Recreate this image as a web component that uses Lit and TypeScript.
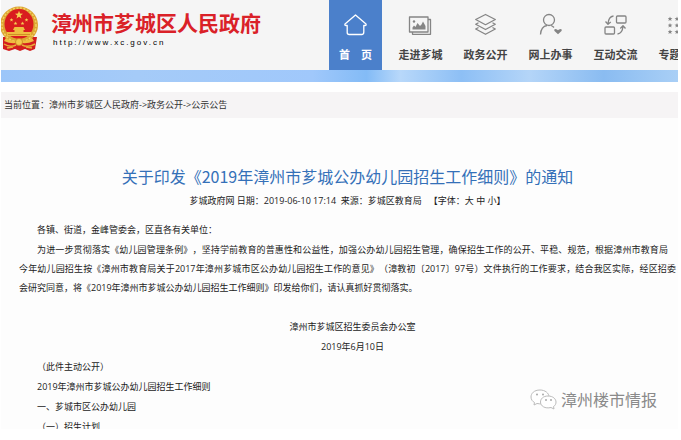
import { LitElement, html, css, svg } from "lit";
import { customElement } from "lit/decorators.js";

const star = (x: number, y: number, r: number) => {
  const pts: string[] = [];
  for (let i = 0; i < 10; i++) {
    const a = -Math.PI / 2 + (i * Math.PI) / 5;
    const q = i % 2 ? r * 0.42 : r;
    pts.push(`${(x + q * Math.cos(a)).toFixed(2)},${(y + q * Math.sin(a)).toFixed(2)}`);
  }
  return svg`<polygon points=${pts.join(" ")} />`;
};

const icons = {
  home: svg`<path d="M12.5 3 L23 12 Q23.6 13.500 22 13.500 H20.8 V20 Q20.8 22.5 18.8 22.5 H6.2 Q4.2 22.5 4.2 20.5 V13.500 H3 Q1.400 13.500 2 12 Z" />`,
  picture: svg`<path d="M1.500 5 H20 V20 H1.500 Z M20.500 7.500 H22.500 V22.300 H4.500 V20.500" />
    <path class="solid" d="M4.500 17.500 V15.500 L6 13.500 L7.500 15 L9.500 11 L12 14 L13.500 12.500 L15 9.500 L17.500 14 V17.500 Z" /><circle class="solid" cx="6" cy="9.500" r="1.200" />`,
  layers: svg`<path d="M12.500 2.500 L22.300 7.500 L12.500 12.700 L2.700 7.500 Z M5.500 10.800 L2.700 12.300 L12.500 17.500 L22.300 12.300 L19.500 10.800 M5.500 15.500 L2.700 17 L12.500 22.300 L22.300 17 L19.500 15.500" />`,
  person: svg`<circle cx="11" cy="8" r="5.500" /><path d="M2.500 22.500 Q3 14.500 9 13.500 M13 13.500 Q14.500 14 16 15.500" />
    <path class="solid" d="M20 22.300 L16.500 19 Q15.600 17 17.600 16.900 Q19.200 17 20 18.300 Q20.800 17 22.400 16.900 Q24.400 17 23.500 19 Z" />`,
  exchange: svg`<rect x="13.500" y="4" width="9.500" height="7" rx="1" /><rect x="2" y="15" width="9.500" height="7" rx="1" />
    <path d="M10.500 4 Q5.500 4.500 5 12 M2.500 9.500 L5 12.300 L7.800 10 M14.500 22 Q19.500 21.500 20 14 M17.300 16.500 L20 13.700 L22.500 16.500" />`,
  stars: svg`<g class="solid">${[7, 13.5, 20].map((y) => [2, 9, 16, 23].map((x) => star(x, y, 2.6)))}</g>`,
};

const nav = [
  { label: "首　页", icon: icons.home },
  { label: "走进芗城", icon: icons.picture },
  { label: "政务公开", icon: icons.layers },
  { label: "网上办事", icon: icons.person },
  { label: "互动交流", icon: icons.exchange },
  { label: "专题专栏", icon: icons.stars },
];

@customElement("app-root")
export class AppRoot extends LitElement {
  static styles = css`
    :host {
      display: flex;
      flex-direction: column;
      box-sizing: border-box;
      height: 100vh;
      padding: 0 3px 11px 1px;
      overflow: hidden;
      background: #fff;
      color: #222;
      font: 9px/20px "Open Sans", "Noto Sans CJK SC", sans-serif;
      text-spacing-trim: space-all;
    }
    a { color: inherit; text-decoration: none; }
    h1, p { margin: 0; }
    .top {
      display: flex;
      justify-content: space-between;
      flex: none;
      height: 70px;
      overflow: hidden;
      background: #f5f5f5;
    }
    .brand { display: flex; gap: 12px; padding-top: 6px; flex: none; }
    .emblem { width: 38px; height: 46px; }
    .name {
      display: block;
      color: #da2128;
      font-family: "Noto Sans CJK SC", sans-serif;
      font-size: 21px;
      font-weight: 700;
      line-height: 32px;
      white-space: nowrap;
    }
    .url {
      display: block;
      padding-left: 2px;
      color: #000;
      font: 400 8px/10px "Liberation Sans", sans-serif;
      letter-spacing: 2px;
    }
    .nav { display: flex; flex: none; width: 349px; overflow: hidden; }
    .item {
      display: flex;
      flex: none;
      flex-direction: column;
      align-items: center;
      gap: 8px;
      width: 65px;
      padding-top: 12px;
      color: #444;
      font-family: "Noto Sans CJK SC", sans-serif;
      font-size: 11px;
      font-weight: 700;
      line-height: 18px;
      white-space: pre;
    }
    .item:first-child {
      width: 53px;
      height: 70px;
      margin-right: 6px;
      background: #4b80cb;
      color: #fff;
    }
    .icon {
      width: 25px;
      height: 25px;
      fill: none;
      stroke: #858585;
      stroke-width: 1.3;
      stroke-linejoin: round;
    }
    .icon .solid { fill: #858585; stroke: none; }
    .item:first-child .icon { stroke: #fff; }
    .sky {
      flex: none;
      height: 12px;
      background: linear-gradient(90deg, #9cc6f9, #a5cbf8 20%, #a0c8fb 46%, #83bbf6 54%, #b8d8fa 59%, #8dbff5 68%, #b4d5f8 78%, #8abcf1 89%, #a9cff6);
    }
    .crumbs {
      flex: none;
      margin-top: 10px;
      padding: 3px 3px;
      background: #f6f4f5;
      color: #333;
    }
    .article {
      flex: 1;
      min-height: 0;
      overflow: hidden;
      padding: 46px 2px 0 18px;
      background: #fdfdfd;
    }
    .title {
      color: #3470b8;
      font-family: "Noto Sans CJK SC", sans-serif;
      font-size: 16px;
      font-weight: 400;
      line-height: 24px;
      text-align: center;
      white-space: nowrap;
    }
    .meta { padding: 3px 0 9px; text-align: center; white-space: pre; }
    .indent { padding-left: 18px; }
    .line { display: block; line-height: 19px; white-space: nowrap; }
    .full { text-align-last: justify; }
    .lead { text-indent: 18px; margin-right: 8px; }
    .sign { padding: 20px 0 0 10px; text-align: center; }
    .mark {
      position: absolute;
      right: 24px;
      bottom: 28px;
      display: flex;
      align-items: center;
      gap: 4px;
      color: #8a8a8a;
      font-size: 16px;
      line-height: 24px;
    }
    .chat { width: 27px; height: 22px; fill: #fff; stroke: #bbb; stroke-width: 1; }
    .chat .eye { fill: #aaa; stroke: none; }
  `;

  private emblem() {
    return svg`<svg class="emblem" viewBox="0 0 38 46" aria-hidden="true">
      <path d="M2 31 H36 L34 43 L29 45 L24 43 L19 45 L14 43 L8 45 L2 43 Z" fill="#d31e20" />
      <ellipse cx="18" cy="19" rx="19" ry="18.500" fill="#dca531" />
      <ellipse cx="18" cy="19" rx="17" ry="17" fill="none" stroke="#f3cf63" stroke-width="1.500" stroke-dasharray="2 1.500" />
      <ellipse cx="18" cy="18" rx="14.500" ry="15" fill="#d91c1f" />
      <g fill="#f6d052">${star(18, 9, 4.2)}${star(10.5, 14, 2)}${star(25.500, 14, 2)}${star(14.5, 17.5, 2)}${star(21.5, 17.5, 2)}</g>
      <path d="M12 24 L13.500 21 H22.500 L24 24 H22.500 V26 H30 V30 H6 V26 H13.500 V24 Z" fill="#efbd40" />
      <path d="M7 28.500 H29" stroke="#c98320" stroke-width=".8" />
      <path d="M5 32 Q12 37 18 33 Q24 37 31 32 L33 35 Q24 39 18 36 Q12 39 3 35 Z" fill="#efbd40" />
      <circle cx="18" cy="36" r="3.500" fill="#f3c74b" stroke="#c98320" stroke-width=".8" />
      <path d="M3 38 Q9 42 15 39 M21 39 Q27 42 34 38 M6 42 L12 41 M25 41 L31 42" fill="none" stroke="#e8ad38" stroke-width="1.500" />
    </svg>`;
  }

  render() {
    return html`
      <header class="top">
        <a class="brand" href="#">
          ${this.emblem()}
          <span><span class="name">漳州市芗城区人民政府</span><span class="url">http://www.xc.gov.cn</span></span>
        </a>
        <nav class="nav">
          ${nav.map(
            (n) => html`<a class="item" href="#"><svg class="icon" viewBox="0 0 25 25" aria-hidden="true">${n.icon}</svg><span>${n.label}</span></a>`
          )}
        </nav>
      </header>
      <div class="sky"></div>
      <nav class="crumbs">当前位置：<a href="#">漳州市芗城区人民政府</a>-&gt;<a href="#">政务公开</a>-&gt;<a href="#">公示公告</a></nav>
      <main class="article">
        <h1 class="title">关于印发《2019年漳州市芗城公办幼儿园招生工作细则》的通知</h1>
        <p class="meta">芗城政府网 日期：2019-06-10 17:14 &nbsp;来源：芗城区教育局 &nbsp; 【字体：<a href="#">大</a> <a href="#">中</a> <a href="#">小</a>】</p>
        <p class="indent">各镇、街道，金峰管委会，区直各有关单位：</p>
        <p>
          <span class="line full lead">为进一步贯彻落实《幼儿园管理条例》，坚持学前教育的普惠性和公益性，加强公办幼儿园招生管理，确保招生工作的公开、平稳、规范，根据漳州市教育局</span>
          <span class="line full">今年幼儿园招生按《漳州市教育局关于2017年漳州芗城市区公办幼儿园招生工作的意见》（漳教初〔2017〕97号）文件执行的工作要求，结合我区实际，经区招委</span>
          <span class="line">会研究同意，将《2019年漳州市芗城公办幼儿园招生工作细则》印发给你们，请认真抓好贯彻落实。</span>
        </p>
        <div class="sign">
          <p>漳州市芗城区招生委员会办公室</p>
          <p>2019年6月10日</p>
        </div>
        <div class="indent">
          <p>（此件主动公开）</p>
          <p>2019年漳州市芗城公办幼儿园招生工作细则</p>
          <p>一、芗城市区公办幼儿园</p>
          <p>（一）招生计划</p>
        </div>
      </main>
      <div class="mark">
        <svg class="chat" viewBox="0 0 27 22" aria-hidden="true">
          <path d="M10 1 C4 1 1 4.500 1 8 C1 10.500 2.500 12.500 4.500 13.500 L4 16 L7 14.500 C14 16 19 12 19 8 C19 4 15 1 10 1 Z" />
          <path d="M18 7 C13 7 10.500 10 10.500 13 C10.500 17 15 20 21 18.500 L24 20 L23.500 17.500 C25.500 16.500 26 14.500 26 13 C26 10 23 7 18 7 Z" />
          <g class="eye"><circle cx="7" cy="5.500" r="1" /><circle cx="13" cy="5.500" r="1" /><circle cx="16" cy="11" r="1" /><circle cx="21" cy="11" r="1" /></g>
        </svg>
        <span>漳州楼市情报</span>
      </div>
    `;
  }
}
